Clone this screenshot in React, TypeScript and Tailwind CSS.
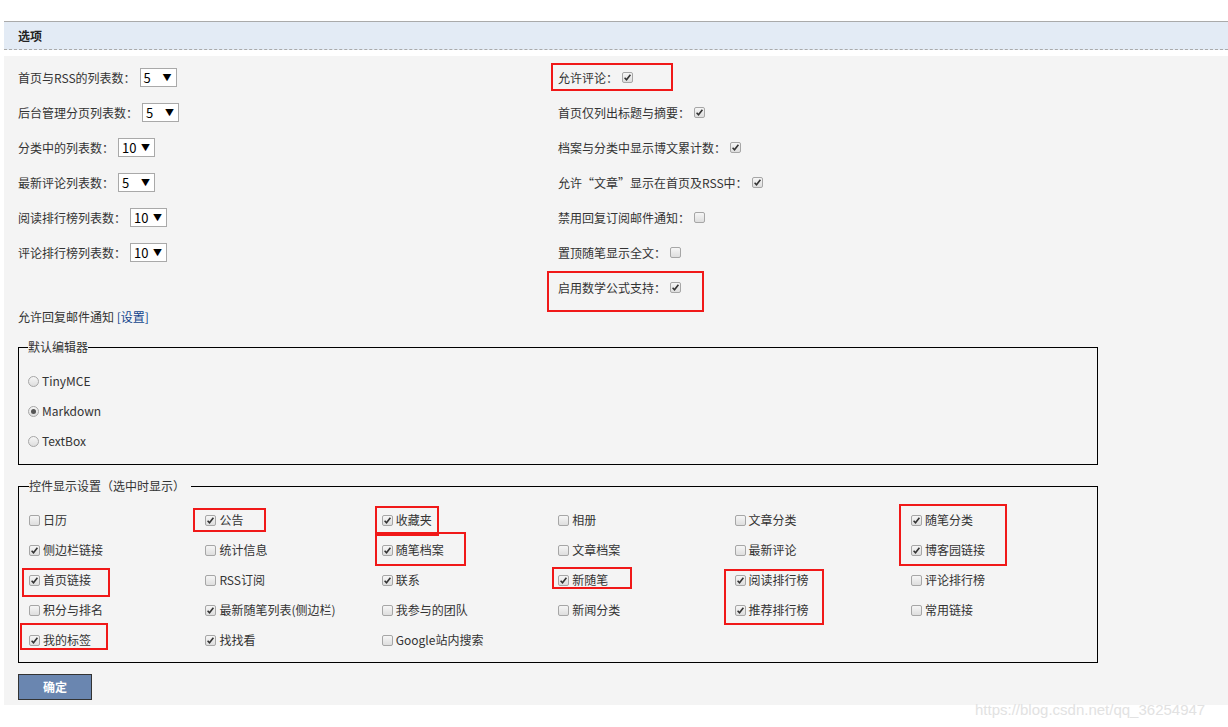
const font = { fontFamily: '"Noto Sans CJK SC", "Noto Sans", sans-serif' };

function Box({ checked }: { checked?: boolean }) {
    return (
        <span className="inline-flex items-center justify-center w-[11px] h-[11px] rounded-[2px] border border-[#a6a6a6] bg-gradient-to-b from-[#f6f6f6] to-[#dedede] shrink-0">
            {checked && (
                <svg width="9" height="9" viewBox="0 0 9 9">
                    <path d="M1.6 4.8 L3.5 6.7 L7.4 1.8" stroke="#333" strokeWidth="1.6" fill="none" />
                </svg>
            )}
        </span>
    );
}

function Radio({ checked }: { checked?: boolean }) {
    return (
        <span className="inline-flex items-center justify-center w-[11px] h-[11px] rounded-full border border-[#a6a6a6] bg-gradient-to-b from-[#f6f6f6] to-[#dedede] shrink-0">
            {checked && <span className="w-[5px] h-[5px] rounded-full bg-[#555]" />}
        </span>
    );
}

function Select({ value }: { value: string }) {
    return (
        <span className="inline-flex items-center justify-between w-[37px] h-[19px] ml-[4px] border border-[#a9a9a9] bg-white pl-[3px] pr-[4px] text-[13px] text-black">
            <span>{value}</span>
            <span className="text-[9px]">▼</span>
        </span>
    );
}

const leftRows = [
    ["首页与RSS的列表数：", "5"],
    ["后台管理分页列表数：", "5"],
    ["分类中的列表数：", "10"],
    ["最新评论列表数：", "5"],
    ["阅读排行榜列表数：", "10"],
    ["评论排行榜列表数：", "10"],
];

const rightRows: [string, boolean][] = [
    ["允许评论：", true],
    ["首页仅列出标题与摘要：", true],
    ["档案与分类中显示博文累计数：", true],
    ["允许“文章”显示在首页及RSS中：", true],
    ["禁用回复订阅邮件通知：", false],
    ["置顶随笔显示全文：", false],
    ["启用数学公式支持：", true],
];

const widgets: [string, boolean][] = [
    ["日历", false], ["公告", true], ["收藏夹", true], ["相册", false], ["文章分类", false], ["随笔分类", true],
    ["侧边栏链接", true], ["统计信息", false], ["随笔档案", true], ["文章档案", false], ["最新评论", false], ["博客园链接", true],
    ["首页链接", true], ["RSS订阅", false], ["联系", true], ["新随笔", true], ["阅读排行榜", true], ["评论排行榜", false],
    ["积分与排名", false], ["最新随笔列表(侧边栏)", true], ["我参与的团队", false], ["新闻分类", false], ["推荐排行榜", true], ["常用链接", false],
    ["我的标签", true], ["找找看", true], ["Google站内搜索", false],
];

const marks = [
    "left-[551px] top-[63px] w-[122px] h-[28px]",
    "left-[547px] top-[271px] w-[157px] h-[41px]",
    "left-[193px] top-[508px] w-[73px] h-[24px]",
    "left-[375px] top-[506px] w-[64px] h-[30px]",
    "left-[375px] top-[532px] w-[91px] h-[34px]",
    "left-[552px] top-[567px] w-[80px] h-[22px]",
    "left-[724px] top-[569px] w-[100px] h-[56px]",
    "left-[899px] top-[504px] w-[108px] h-[62px]",
    "left-[22px] top-[568px] w-[88px] h-[29px]",
    "left-[20px] top-[623px] w-[88px] h-[27px]",
];

export default function App() {
    return (
        <div className="relative w-[1228px] h-[727px] bg-white overflow-hidden text-[12px] text-[#333]" style={font}>
            <div className="pt-[21px] pl-[4px]">
                <div className="h-[29px] border-t border-[#aaa] border-b border-b-[#aaa] border-dashed bg-[#e3ebf5] flex items-center pl-[14px] font-bold text-[#222]" style={{ borderTopStyle: "solid" }}>
                    选项
                </div>
                <div className="mt-[6px] bg-[#f4f4f4] px-[14px] pt-[4px] pb-[5px]">
                    <div className="flex">
                        <div className="w-[540px]">
                            {leftRows.map(([label, v]) => (
                                <div key={label} className="h-[35px] flex items-center">
                                    <span>{label}</span>
                                    <Select value={v} />
                                </div>
                            ))}
                        </div>
                        <div>
                            {rightRows.map(([label, c]) => (
                                <div key={label} className="h-[35px] flex items-center gap-[4px]">
                                    <span>{label}</span>
                                    <Box checked={c} />
                                </div>
                            ))}
                        </div>
                    </div>
                    <div className="h-[24px] flex items-center">
                        允许回复邮件通知&nbsp;<span className="text-[#12448c]">[设置]</span>
                    </div>
                    <fieldset className="mt-[10px] w-[1080px] border border-black px-[9px] pb-[8px]">
                        <legend className="px-0 leading-[16px]">默认编辑器</legend>
                        <div className="pt-[11px]">
                            {["TinyMCE", "Markdown", "TextBox"].map((r) => (
                                <div key={r} className="h-[30px] flex items-center gap-[3px]">
                                    <Radio checked={r === "Markdown"} />
                                    <span>{r}</span>
                                </div>
                            ))}
                        </div>
                    </fieldset>
                    <fieldset className="mt-[13px] w-[1080px] border border-black px-[10px] pb-[7px]">
                        <legend className="pl-0 pr-[6px] leading-[16px]">控件显示设置（选中时显示）</legend>
                        <div className="pt-[11px] grid grid-cols-[repeat(6,176.4px)]">
                            {widgets.map(([label, c]) => (
                                <div key={label} className="h-[30px] flex items-center gap-[3px]">
                                    <Box checked={c} />
                                    <span>{label}</span>
                                </div>
                            ))}
                        </div>
                    </fieldset>
                    <button className="mt-[11px] w-[74px] h-[26px] bg-[#6a86b0] border border-[#333] text-white font-bold text-[12px]">
                        确定
                    </button>
                </div>
            </div>
            {marks.map((m) => (
                <div key={m} className={`absolute border-2 border-[#f01818] ${m}`} />
            ))}
            <div className="absolute left-[975px] top-[699px] text-[15px] text-[#e2e2e2]" style={{ fontFamily: '"Liberation Sans", sans-serif' }}>
                https://blog.csdn.net/qq_36254947
            </div>
        </div>
    );
}
